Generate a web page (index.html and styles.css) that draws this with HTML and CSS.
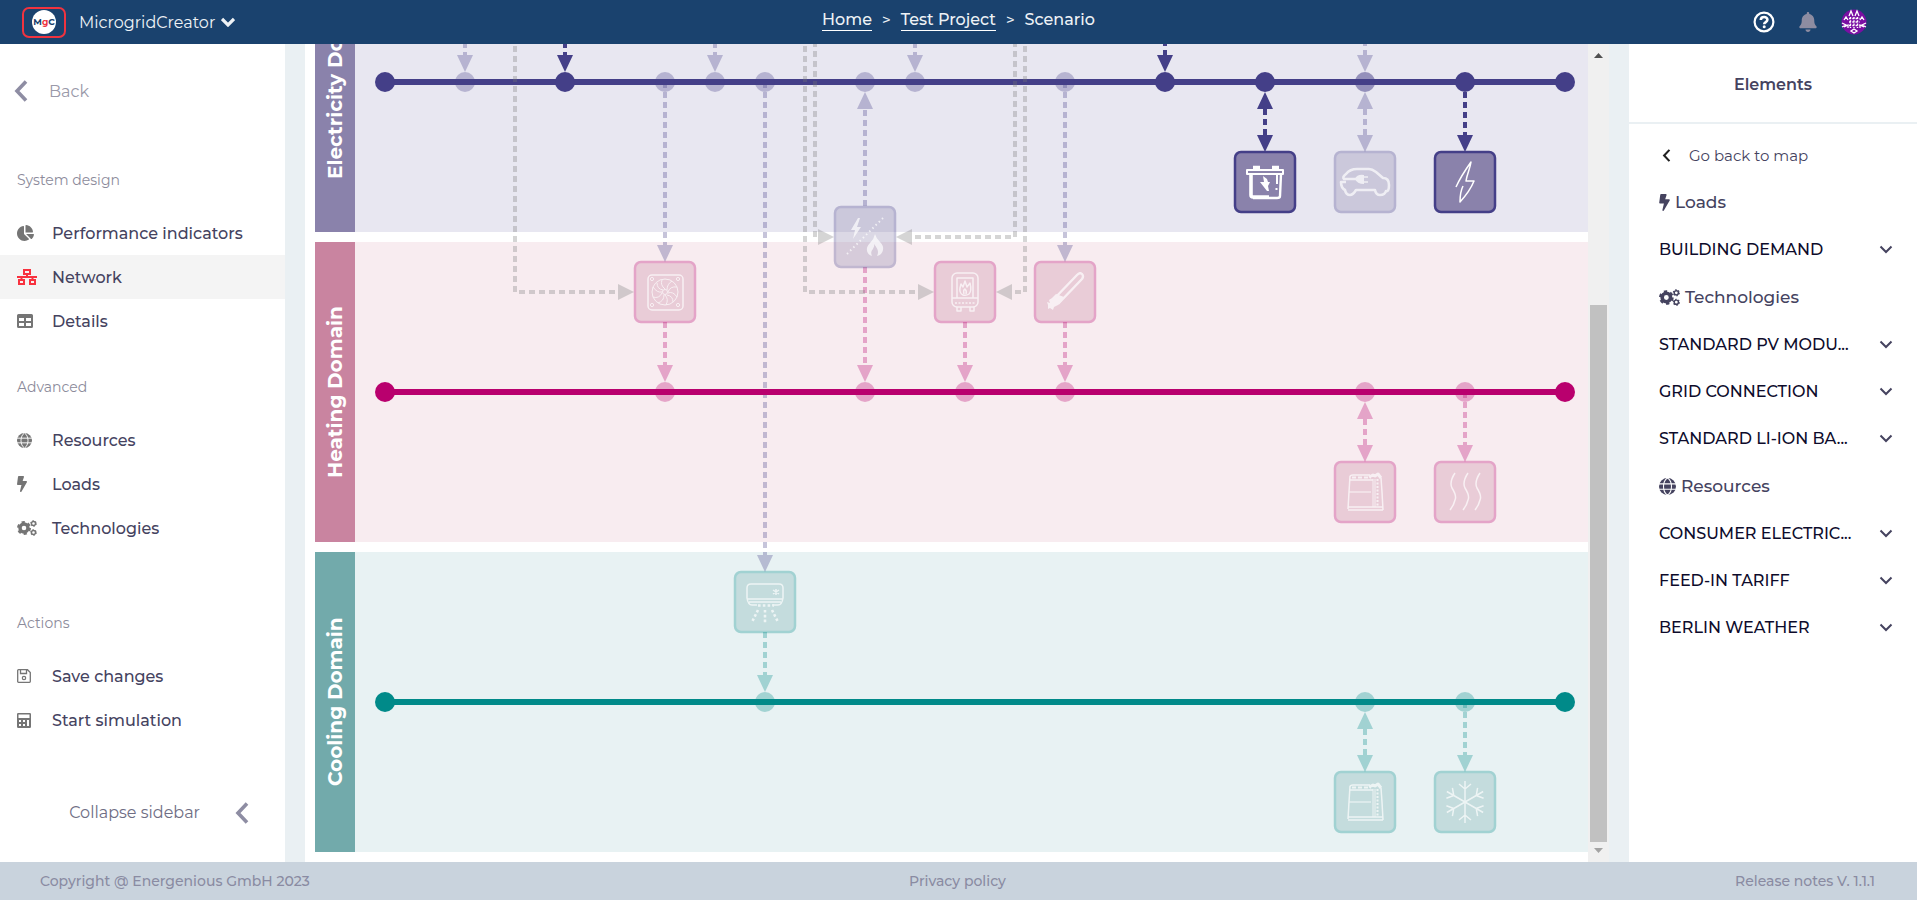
FILE: index.html
```html
<!DOCTYPE html>
<html lang="en">
<head>
<meta charset="utf-8">
<title>MicrogridCreator</title>
<link rel="stylesheet" href="styles.css">
</head>
<body>
<svg class="defs" width="0" height="0" aria-hidden="true">
  <defs>
    <symbol id="bolt" viewBox="0 0 320 512"><path fill="currentColor" d="M296 160H180.600l42.600-129.800C227.200 15 215.700 0 200 0H56C44 0 33.800 8.900 32.200 20.800l-32 240C-1.700 275.200 9.500 288 24 288h118.700L96.600 482.500c-3.600 15.200 8 29.500 23.300 29.500 8.400 0 16.400-4.400 20.800-12l176-304c9.300-15.900-2.200-36-20.700-36z"/></symbol>
    <symbol id="pie" viewBox="0 0 544 512"><path fill="currentColor" d="M527.79 288H290.5l158.03 158.03c6.04 6.04 15.98 6.53 22.19.68 38.7-36.46 65.32-85.61 73.13-140.86 1.34-9.46-6.51-17.85-16.06-17.85zm-15.83-64.8C503.72 103.74 408.26 8.28 288.8.04 279.68-.59 272 7.1 272 16.24V240h223.77c9.14 0 16.82-7.68 16.19-16.8zM224 288V50.71c0-9.55-8.39-17.4-17.84-16.06C86.99 51.49-4.1 155.6.14 280.37 4.5 408.51 114.83 513.59 243.03 511.98c50.4-.63 96.97-16.87 135.26-44.03 7.9-5.6 8.42-17.23 1.57-24.08L224 288z"/></symbol>
    <symbol id="network" viewBox="0 0 20 16"><path fill="none" stroke="currentColor" stroke-width="2" d="M7 1h6v4H7zM2 11h5v4H2zM13 11h5v4h-5zM10 5v3M0 8h20M4.500 8v3M15.500 8v3"/></symbol>
    <symbol id="table" viewBox="0 0 16 14"><path fill="currentColor" fill-rule="evenodd" d="M1.500 0h13A1.500 1.500 0 0 1 16 1.500v11a1.500 1.500 0 0 1-1.500 1.500h-13A1.500 1.500 0 0 1 0 12.500v-11A1.500 1.500 0 0 1 1.500 0zM2 4v3h5V4zM9 4v3h5V4zM2 9v3h5V9zM9 9v3h5V9z"/></symbol>
    <symbol id="globe" viewBox="0 0 16 16"><circle cx="8" cy="8" r="8" fill="currentColor"/><path fill="none" stroke="#fff" stroke-width="1" d="M0 5.500h16M0 10.500h16M8 0C3 3 3 13 8 16M8 0c5 3 5 13 0 16"/></symbol>
    <symbol id="cogs" viewBox="0 0 20 16"><circle cx="7" cy="8" r="4" fill="none" stroke="currentColor" stroke-width="3.400"/><circle cx="7" cy="8" r="6" fill="none" stroke="currentColor" stroke-width="2" stroke-dasharray="3.200 3.083"/><circle cx="16.500" cy="3.500" r="2" fill="none" stroke="currentColor" stroke-width="1.400"/><circle cx="16.500" cy="3.500" r="2.900" fill="none" stroke="currentColor" stroke-width="1" stroke-dasharray="1.500 1.537"/><circle cx="16.500" cy="12.500" r="2" fill="none" stroke="currentColor" stroke-width="1.400"/><circle cx="16.500" cy="12.500" r="2.900" fill="none" stroke="currentColor" stroke-width="1" stroke-dasharray="1.500 1.537"/></symbol>
    <symbol id="save" viewBox="0 0 14 14"><path fill="none" stroke="currentColor" stroke-width="1.300" d="M1.500.7h9l2.800 2.800v9a.8.8 0 0 1-.8.800h-11a.8.8 0 0 1-.8-.8v-11a.8.8 0 0 1 .8-.8zM3.500 1v3.500h6V1"/><circle cx="7" cy="9" r="1.700" fill="none" stroke="currentColor" stroke-width="1.200"/></symbol>
    <symbol id="calc" viewBox="0 0 14 15"><path fill="currentColor" fill-rule="evenodd" d="M1.200 0h11.600A1.200 1.200 0 0 1 14 1.200v12.600a1.200 1.200 0 0 1-1.200 1.200H1.200A1.200 1.200 0 0 1 0 13.800V1.200A1.200 1.200 0 0 1 1.200 0zM1.500 1.500v3.500h11V1.500zM2 7v2h2V7zM6 7v2h2V7zM10 7v6h2V7zM2 11v2h2v-2zM6 11v2h2v-2z"/></symbol>
    <symbol id="left" viewBox="0 0 14 22"><path fill="none" stroke="currentColor" stroke-width="3.600" d="M12 1.500 3 11l9 9.500"/></symbol>
    <symbol id="down" viewBox="0 0 14 9"><path fill="none" stroke="currentColor" stroke-width="2" d="M1.500 1.500 7 7l5.500-5.500"/></symbol>
    <g id="tank"><path d="M-15-16-16 0l-1 17M-15-12H8M-17 15h35M-17 18h35M-15-15q0-2 3-2H5M16-14l1 14 1 18"/><path stroke-width="1" d="M8-13v28M10-13v28"/><path stroke-width="1.200" d="M-16 0H6"/><path stroke-width="2" stroke-dasharray="4 2" d="M-13-14.500H6"/><path stroke-width="2" stroke-dasharray="2 1.500" d="M12.500-13v28"/><path stroke-width="3" d="m4-15 4-2 2 1 3-2 3 4"/></g>
  </defs>
</svg>
<div class="app">
  <header class="topbar">
    <div class="brand">
      <svg class="logo" viewBox="0 0 44 31" aria-label="MgC logo"><rect x="1" y="1" width="42" height="29" rx="6" fill="none" stroke="#f0333f" stroke-width="2"/><circle cx="22" cy="15" r="12" fill="#fff"/><text x="22" y="18" text-anchor="middle" class="logo-text">M<tspan fill="#f0333f">g</tspan>C</text></svg>
      <button class="brand-button">MicrogridCreator <svg class="icon-down-bold" viewBox="0 0 14 10"><path fill="none" stroke="currentColor" stroke-width="3.200" d="m1 2 6 6 6-6"/></svg></button>
    </div>
    <nav class="crumbs" aria-label="Breadcrumb"><a href="#">Home</a><span class="sep">&gt;</span><a href="#">Test Project</a><span class="sep">&gt;</span><span>Scenario</span></nav>
    <div class="tools">
      <button class="tool" aria-label="Help"><svg width="22" height="22" viewBox="0 0 22 22"><circle cx="11" cy="11" r="9.400" fill="none" stroke="#fff" stroke-width="2.200"/><path fill="none" stroke="#fff" stroke-width="2.600" d="M7.800 9c0-4 6.600-3.800 6.600-.2 0 2.400-3.200 2.200-3.200 4.500"/><circle cx="11.200" cy="15.800" r="1.500" fill="#fff"/></svg></button>
      <button class="tool" aria-label="Notifications"><svg width="18" height="20" viewBox="0 0 448 512"><path fill="#8d8ca1" d="M224 512c35.320 0 63.970-28.650 63.970-64H160.030c0 35.350 28.650 64 63.970 64zm215.390-149.710c-19.320-20.760-55.470-51.990-55.470-154.290 0-77.700-54.480-139.900-127.940-155.160V32c0-17.670-14.320-32-31.980-32s-31.980 14.330-31.980 32v20.840C118.560 68.100 64.080 130.300 64.080 208c0 102.300-36.150 133.530-55.470 154.290-6 6.450-8.660 14.160-8.610 21.710.11 16.400 12.980 32 32.100 32h383.800c19.120 0 32-15.600 32.100-32 .05-7.550-2.610-15.270-8.610-21.710z"/></svg></button>
      <button class="tool" aria-label="Account"><svg width="26" height="26" viewBox="0 0 26 26"><circle cx="13" cy="13" r="12.500" fill="#7a0fa3"/><path fill="none" stroke="#fff" stroke-width="1.300" d="m8 7 2-5 2 5M14 7l2-5 2 5M3 11l2-3 2 3M19 11l2-3 2 3M1 14l4 2-4 2M25 14l-4 2 4 2M10 22l3-2 3 2-3 2zM3 18l4-2v3M23 18l-4-2v3"/><path stroke="#fff" stroke-width="1.400" stroke-dasharray="2 1.300" d="M8 9.500h10.500M8 13h10.500M8 16.500h10.500M9.500 8v11M13 8v11M16.500 8v11"/></svg></button>
    </div>
  </header>

  <div class="body">
    <aside class="sidebar">
      <a class="back" href="#"><svg class="chev-left"><use href="#left"/></svg>Back</a>
      <nav class="menu">
        <h2 class="menu-title">System design</h2>
        <a class="item" href="#"><span class="ico"><svg width="17" height="16"><use href="#pie"/></svg></span>Performance indicators</a>
        <a class="item active" href="#"><span class="ico"><svg width="20" height="16"><use href="#network"/></svg></span>Network</a>
        <a class="item" href="#"><span class="ico"><svg width="16" height="14"><use href="#table"/></svg></span>Details</a>
        <h2 class="menu-title">Advanced</h2>
        <a class="item" href="#"><span class="ico"><svg width="15" height="15"><use href="#globe"/></svg></span>Resources</a>
        <a class="item" href="#"><span class="ico"><svg width="10" height="16"><use href="#bolt"/></svg></span>Loads</a>
        <a class="item" href="#"><span class="ico"><svg width="20" height="16"><use href="#cogs"/></svg></span>Technologies</a>
        <h2 class="menu-title actions">Actions</h2>
        <button class="item"><span class="ico"><svg width="14" height="14"><use href="#save"/></svg></span>Save changes</button>
        <button class="item"><span class="ico"><svg width="14" height="15"><use href="#calc"/></svg></span>Start simulation</button>
      </nav>
      <button class="collapse">Collapse sidebar<svg class="chev-left"><use href="#left"/></svg></button>
    </aside>

    <main class="workspace">
      <div class="viewport">
        <div class="canvas">
          <section class="domain elec"><h3 class="domain-label">Electricity Domain</h3></section>
          <section class="domain heat"><h3 class="domain-label">Heating Domain</h3></section>
          <section class="domain cool"><h3 class="domain-label">Cooling Domain</h3></section>
          <svg class="diagram" width="1273" height="920" viewBox="315 -68 1273 920" aria-label="Energy network">
            <g class="c-elec">
              <path class="bus" d="M385 82H1565"/>
              <g class="dot"><circle cx="385" cy="82" r="10"/><circle cx="565" cy="82" r="10"/><circle cx="1165" cy="82" r="10"/><circle cx="1265" cy="82" r="10"/><circle cx="1465" cy="82" r="10"/><circle cx="1565" cy="82" r="10"/></g>
              <g class="dot faint"><circle cx="465" cy="82" r="10"/><circle cx="665" cy="82" r="10"/><circle cx="715" cy="82" r="10"/><circle cx="765" cy="82" r="10"/><circle cx="865" cy="82" r="10"/><circle cx="915" cy="82" r="10"/><circle cx="1065" cy="82" r="10"/><circle cx="1365" cy="82" r="10"/></g>
              <circle class="dot faint" cx="1365" cy="82" r="10"/>
              <path class="wire" d="M565 32V55M1165 30V55M1265 109V135M1465 82V135"/>
              <path class="tip" d="M557 55h16l-8 17zM1157 55h16l-8 17zM1257 109h16l-8-17zM1257 135h16l-8 17zM1457 135h16l-8 17z"/>
              <g class="faint">
                <path class="wire" d="M465 32V55M715 32V55M915 32V55M1365 30V55M665 82V245M765 82V555M865 206V109M1065 82V245M1365 109V135"/>
                <path class="tip" d="M457 55h16l-8 17zM707 55h16l-8 17zM907 55h16l-8 17zM1357 55h16l-8 17zM657 245h16l-8 17zM757 555h16l-8 17zM857 109h16l-8-17zM1057 245h16l-8 17zM1357 109h16l-8-17zM1357 135h16l-8 17z"/>
              </g>
            </g>
            <g class="c-heat">
              <path class="bus" d="M385 392H1565"/>
              <g class="dot"><circle cx="385" cy="392" r="10"/><circle cx="1565" cy="392" r="10"/></g>
              <g class="dot faint"><circle cx="665" cy="392" r="10"/><circle cx="865" cy="392" r="10"/><circle cx="965" cy="392" r="10"/><circle cx="1065" cy="392" r="10"/><circle cx="1365" cy="392" r="10"/><circle cx="1465" cy="392" r="10"/></g>
              <g class="faint">
                <path class="wire" d="M665 322V365M865 267V365M965 322V365M1065 322V365M1365 419V445M1465 392V445"/>
                <path class="tip" d="M657 365h16l-8 17zM857 365h16l-8 17zM957 365h16l-8 17zM1057 365h16l-8 17zM1357 419h16l-8-17zM1357 445h16l-8 17zM1457 445h16l-8 17z"/>
              </g>
            </g>
            <g class="c-cool">
              <path class="bus" d="M385 702H1565"/>
              <g class="dot"><circle cx="385" cy="702" r="10"/><circle cx="1565" cy="702" r="10"/></g>
              <g class="dot faint"><circle cx="765" cy="702" r="10"/><circle cx="1365" cy="702" r="10"/><circle cx="1465" cy="702" r="10"/></g>
              <g class="faint">
                <path class="wire" d="M765 632V675M1365 729V755M1465 702V755"/>
                <path class="tip" d="M757 675h16l-8 17zM1357 729h16l-8-17zM1357 755h16l-8 17zM1457 755h16l-8 17z"/>
              </g>
            </g>
            <g class="c-gas faint">
              <path class="wire" d="M515 36V292H618M805 36V292H918M815 41V237H818M1015 41V237H912M1025 36V292H1012"/>
              <path class="tip" d="M618 284v16l16-8zM918 284v16l16-8zM818 229v16l16-8zM912 229v16l-16-8zM1012 284v16l-16-8z"/>
            </g>

            <g class="node c-elec" transform="translate(1265 182)"><rect class="box" x="-30" y="-30" width="60" height="60" rx="6"/>
              <g class="glyph"><path stroke-width="2" d="M-18-12h36v4h-36z"/><path stroke-width="3.600" d="M-14-8v21q0 2 2 2H4"/><path stroke-width="2.400" d="M-12 16H12q3 0 3-2l1-22"/><path stroke-width="3.600" d="M-12-14.500h7M7-14.500h7"/><path stroke-width="2" d="M12-7v9M11.500 6v2"/><path class="solid" d="m-2-6 4 3 1 3h2l-2 4 1 5h-2l-7-9h4z"/></g></g>
            <g class="node c-elec faint-node" transform="translate(1365 182)"><rect class="box" x="-30" y="-30" width="60" height="60" rx="6"/>
              <g class="glyph"><path stroke-width="2.600" d="M-8-3h-13q-2-2 2-5 4-5 11-5H4q3 0 7 3l7 6q6 0 6 7 0 7-3 6-1 4-6 4-4 0-5-5H-9q-3 5-6 5-4 0-5-5-4-2-4-8h5"/><path class="solid" d="M-10-3q2-5 9-4v9q-7 0-9-5z"/><path stroke-width="1.500" d="M-1-5h4M-1 0h4"/></g></g>
            <g class="node c-elec" transform="translate(1465 182)"><rect class="box" x="-30" y="-30" width="60" height="60" rx="6"/>
              <path class="glyph" stroke-width="2" d="M-9 5C-4-6 1-13 6-20 5-13 2-8 1-1H9Q5 9-5 20C-5 14-4 8-2 4"/></g>
            <g class="node c-elec faint-node" transform="translate(865 237)"><rect class="box" x="-30" y="-30" width="60" height="60" rx="6"/>
              <g class="glyph"><path class="solid" d="m-7-19-7 12h4l-2 9 8-12h-4l3-9z"/><path stroke-width="2" stroke-dasharray="1.500 3" d="M-18 17 18-19"/><path class="solid" fill-rule="evenodd" d="M10-3q-1 5-5 9-4 4-3 8 1 4 5 5-2-4 1-7 2-3 1-5 4 5 4 8 0 2-1 4 5-1 6-6 1-4-3-8-4-4-5-8z"/></g></g>
            <g class="node c-heat faint-node" transform="translate(665 292)"><rect class="box" x="-30" y="-30" width="60" height="60" rx="6"/>
              <g class="glyph"><rect x="-17" y="-17" width="35" height="35" rx="4"/><g stroke-width="1"><circle r="13"/><circle r="2.500"/><circle cx="-13" cy="-13" r="1.600"/><circle cx="13" cy="-13" r="1.600"/><circle cx="-13" cy="13" r="1.600"/><circle cx="13" cy="13" r="1.600"/><path d="M0-3q-5-4-3-9M2-2q0-6 5-9M3 0q2-6 9-5M3 1q5-2 9 4M2 3q6 1 6 7M0 3q4 4 1 10M-1 3q0 6-6 8M-3 1q-3 6-9 4M-3 0q-5 1-9-5M-2-2q-6-1-6-7"/></g></g></g>
            <g class="node c-heat faint-node" transform="translate(965 292)"><rect class="box" x="-30" y="-30" width="60" height="60" rx="6"/>
              <g class="glyph"><rect x="-13" y="-19" width="26" height="34" rx="5"/><path d="M-8 6v-20H8V6M-13 6h26M-8 15v4h4v-4M5 15v4h4v-4"/><path stroke-dasharray="2 1.500" d="M-10 11h21"/><path d="M-2 3q-4-2-3-7l1-4 2 3 2-6 2 6 3-4q2 8-1 11-3 2-6 1zM-1 2q-1-4 1-5 2 2 1 5"/></g></g>
            <g class="node c-heat faint-node" transform="translate(1065 292)"><rect class="box" x="-30" y="-30" width="60" height="60" rx="6"/>
              <g class="glyph"><path stroke-width="2.400" d="M-12 8 12-17q3-3 5-1 2 2 0 5L-7 12"/><path class="solid" d="m-13 6 4-4 8 3-6 8-4 2-1 3-3-2-2 1v-4l-1-3 3 1-1-3z"/></g></g>
            <g class="node c-heat faint-node" transform="translate(1365 492)"><rect class="box" x="-30" y="-30" width="60" height="60" rx="6"/><use class="glyph" href="#tank"/></g>
            <g class="node c-heat faint-node" transform="translate(1465 492)"><rect class="box" x="-30" y="-30" width="60" height="60" rx="6"/>
              <path class="glyph" d="M-10-19q-6 9-3 15 5 8 3 12-1 5-5 10M3-19q-6 9-3 15 5 8 3 12-1 5-5 10M15-19q-6 9-3 15 5 8 3 12-1 5-5 10"/></g>
            <g class="node c-cool faint-node" transform="translate(765 602)"><rect class="box" x="-30" y="-30" width="60" height="60" rx="6"/>
              <g class="glyph"><path d="M-14-18h28q4 0 4 4v10q-1 7-5 7H7M-8 3h-5q-4 0-5-7v-10q0-4 4-4M-18-3h36M-16 0h32"/><path d="M11-13v6M8-12l6 4M14-12l-6 4"/><path stroke-width="2.600" stroke-dasharray="2.600 2.200" d="M-7 3.500h16M0 8v13M-7 8l-6 12M7 8l6 12"/></g></g>
            <g class="node c-cool faint-node" transform="translate(1365 802)"><rect class="box" x="-30" y="-30" width="60" height="60" rx="6"/><use class="glyph" href="#tank"/></g>
            <g class="node c-cool faint-node" transform="translate(1465 802)"><rect class="box" x="-30" y="-30" width="60" height="60" rx="6"/>
              <g class="glyph" stroke-width="1.700"><path id="arm" d="M0 0v-21M-6-18l6 5 6-5"/><use href="#arm" transform="rotate(60)"/><use href="#arm" transform="rotate(120)"/><use href="#arm" transform="rotate(180)"/><use href="#arm" transform="rotate(240)"/><use href="#arm" transform="rotate(300)"/></g></g>
          </svg>
        </div>
      </div>
      <div class="scrollbar" aria-hidden="true">
        <svg class="arrow" viewBox="0 0 9 5"><path fill="#505050" d="M0 5 4.500 0 9 5z"/></svg>
        <div class="track"><div class="thumb"></div></div>
        <svg class="arrow" viewBox="0 0 9 5"><path fill="#a3a3a3" d="m0 0 4.500 5L9 0z"/></svg>
      </div>
    </main>

    <aside class="elements">
      <h2 class="elements-title">Elements</h2>
      <div class="elements-body">
        <a class="go-back" href="#"><svg class="chev-small"><use href="#left"/></svg>Go back to map</a>
        <h3 class="group"><svg width="11" height="17"><use href="#bolt"/></svg>Loads</h3>
        <button class="entry"><span>BUILDING DEMAND</span><svg><use href="#down"/></svg></button>
        <h3 class="group"><svg width="21" height="17"><use href="#cogs"/></svg>Technologies</h3>
        <button class="entry"><span>STANDARD PV MODU...</span><svg><use href="#down"/></svg></button>
        <button class="entry"><span>GRID CONNECTION</span><svg><use href="#down"/></svg></button>
        <button class="entry"><span>STANDARD LI-ION BA...</span><svg><use href="#down"/></svg></button>
        <h3 class="group"><svg width="17" height="17"><use href="#globe"/></svg>Resources</h3>
        <button class="entry"><span>CONSUMER ELECTRIC...</span><svg><use href="#down"/></svg></button>
        <button class="entry"><span>FEED-IN TARIFF</span><svg><use href="#down"/></svg></button>
        <button class="entry"><span>BERLIN WEATHER</span><svg><use href="#down"/></svg></button>
      </div>
    </aside>
  </div>

  <footer class="footer"><span>Copyright @ Energenious GmbH 2023</span><a href="#">Privacy policy</a><a href="#">Release notes V. 1.1.1</a></footer>
</div>
</body>
</html>
```
FILE: styles.css
```css
* { box-sizing: border-box; }
body { margin: 0; font-family: Montserrat, Inter, "Open Sans", sans-serif; color: #45435f; }
a { color: inherit; text-decoration: none; }
button { font: inherit; color: inherit; background: none; border: 0; padding: 0; cursor: pointer; text-align: left; }
h2, h3 { margin: 0; }
svg { display: block; flex: none; }
.defs { position: absolute; }

.app { height: 100vh; display: flex; flex-direction: column; }

.topbar { height: 44px; flex: none; display: grid; grid-template-columns: 1fr auto 1fr; align-items: center; background: #1a426e; color: #eef2f6; padding: 0 22px; }
.brand { display: flex; align-items: center; gap: 13px; }
.logo { width: 44px; height: 31px; }
.logo-text { font-size: 9px; font-weight: 700; fill: #1a426e; }
.brand-button { display: flex; align-items: center; gap: 6px; font-size: 16px; }
.icon-down-bold { width: 14px; height: 10px; }
.crumbs { display: flex; align-items: baseline; gap: 10px; font-size: 16px; font-weight: 500; line-height: 20px; padding-bottom: 4px; }
.crumbs a { border-bottom: 1px solid #fff; }
.crumbs .sep { font-size: 15px; }
.tools { display: flex; align-items: center; justify-content: flex-end; gap: 24px; padding-right: 28px; }

.body { flex: 1; min-height: 0; display: flex; gap: 20px; background: #eaf0f3; }

.sidebar { width: 285px; flex: none; background: #fff; display: flex; flex-direction: column; }
.back { display: flex; align-items: center; gap: 21px; height: 44px; margin-top: 25px; padding-left: 14px; font-size: 16px; color: #9a99a9; }
.chev-left { width: 14px; height: 22px; color: #8e8da3; }
.menu { display: flex; flex-direction: column; padding-top: 55px; }
.menu-title { font-size: 14px; font-weight: 400; line-height: 24px; color: #8c8b9b; padding: 0 17px; margin-bottom: 19px; }
.item + .menu-title { margin-top: 32px; }
.item + .menu-title.actions { margin-top: 61px; }
.item { display: flex; align-items: center; height: 44px; padding-left: 17px; font-size: 16px; font-weight: 500; color: #45435f; }
.ico { width: 35px; flex: none; color: #757575; }
.active { background: #f4f4f4; }
.active .ico { color: #f8323f; }
.collapse { display: flex; align-items: center; gap: 35px; margin: auto 36px 36px auto; font-size: 16px; line-height: 26px; color: #6f6e84; }

.workspace { flex: 1; min-width: 0; display: flex; background: #fff; }
.viewport { flex: 1; min-width: 0; overflow: hidden; display: flex; flex-direction: column; justify-content: flex-end; padding: 0 0 10px 10px; }
.canvas { position: relative; flex: none; display: flex; flex-direction: column; gap: 10px; }
.domain { height: 300px; display: flex; }
.domain-label { width: 40px; display: flex; align-items: center; justify-content: center; writing-mode: vertical-rl; transform: rotate(180deg); color: #fff; font-size: 20px; font-weight: 700; white-space: nowrap; }
.elec { background: #e8e7f1; }
.elec .domain-label { background: #8a82ab; }
.heat { background: #f8ecf0; }
.heat .domain-label { background: #c984a0; }
.cool { background: #e8f2f3; }
.cool .domain-label { background: #72aaab; }

.diagram { position: absolute; left: 0; top: 0; }
.c-elec { color: #443f88; --fill: #8a82ab; }
.c-heat { color: #b9006e; --fill: #c984a0; }
.c-cool { color: #008a89; --fill: #72aaab; }
.c-gas { color: #777; }
.bus { stroke: currentColor; stroke-width: 6; }
.dot, .tip { fill: currentColor; }
.wire { fill: none; stroke: currentColor; stroke-width: 4; stroke-dasharray: 6 4; }
.faint { opacity: .3; }
.box { fill: var(--fill); stroke: currentColor; stroke-width: 2.5; }
.faint-node .box { opacity: .3; }
.glyph { fill: none; stroke: #fff; stroke-width: 1.5; stroke-linecap: butt; stroke-linejoin: round; }
.glyph .solid { fill: #fff; stroke: none; }
.faint-node .glyph { opacity: .7; }

.scrollbar { width: 21px; flex: none; background: #f0f0f0; display: flex; flex-direction: column; align-items: center; padding: 9px 0; gap: 6px; }
.arrow { width: 9px; height: 5px; }
.track { flex: 1; width: 17px; display: flex; flex-direction: column; justify-content: flex-end; }
.thumb { height: 69%; background: #c1c1c1; }

.elements { width: 288px; flex: none; background: #fff; }
.elements-title { height: 80px; display: flex; align-items: center; justify-content: center; padding-top: 2px; font-size: 16px; font-weight: 600; border-bottom: 2px solid #eaf0f3; }
.elements-body { padding: 8px 24px 0 30px; display: flex; flex-direction: column; }
.go-back { display: flex; align-items: center; gap: 18px; height: 46px; padding-left: 3px; font-size: 15px; }
.chev-small { width: 9px; height: 13px; color: #222; }
.group { display: flex; align-items: center; gap: 5px; height: 48px; font-size: 17px; font-weight: 500; }
.entry { display: flex; align-items: center; justify-content: space-between; height: 47px; font-size: 16px; font-weight: 500; color: #0d0b2b; white-space: nowrap; }
.entry svg { width: 14px; height: 9px; color: #45435f; }

.footer { height: 38px; flex: none; display: grid; grid-template-columns: 1fr auto 1fr; align-items: center; padding: 0 42px 0 40px; background: #c9d3dd; color: #8a8ba2; font-size: 14px; font-weight: 500; }
.footer a:last-child { text-align: right; }
```
